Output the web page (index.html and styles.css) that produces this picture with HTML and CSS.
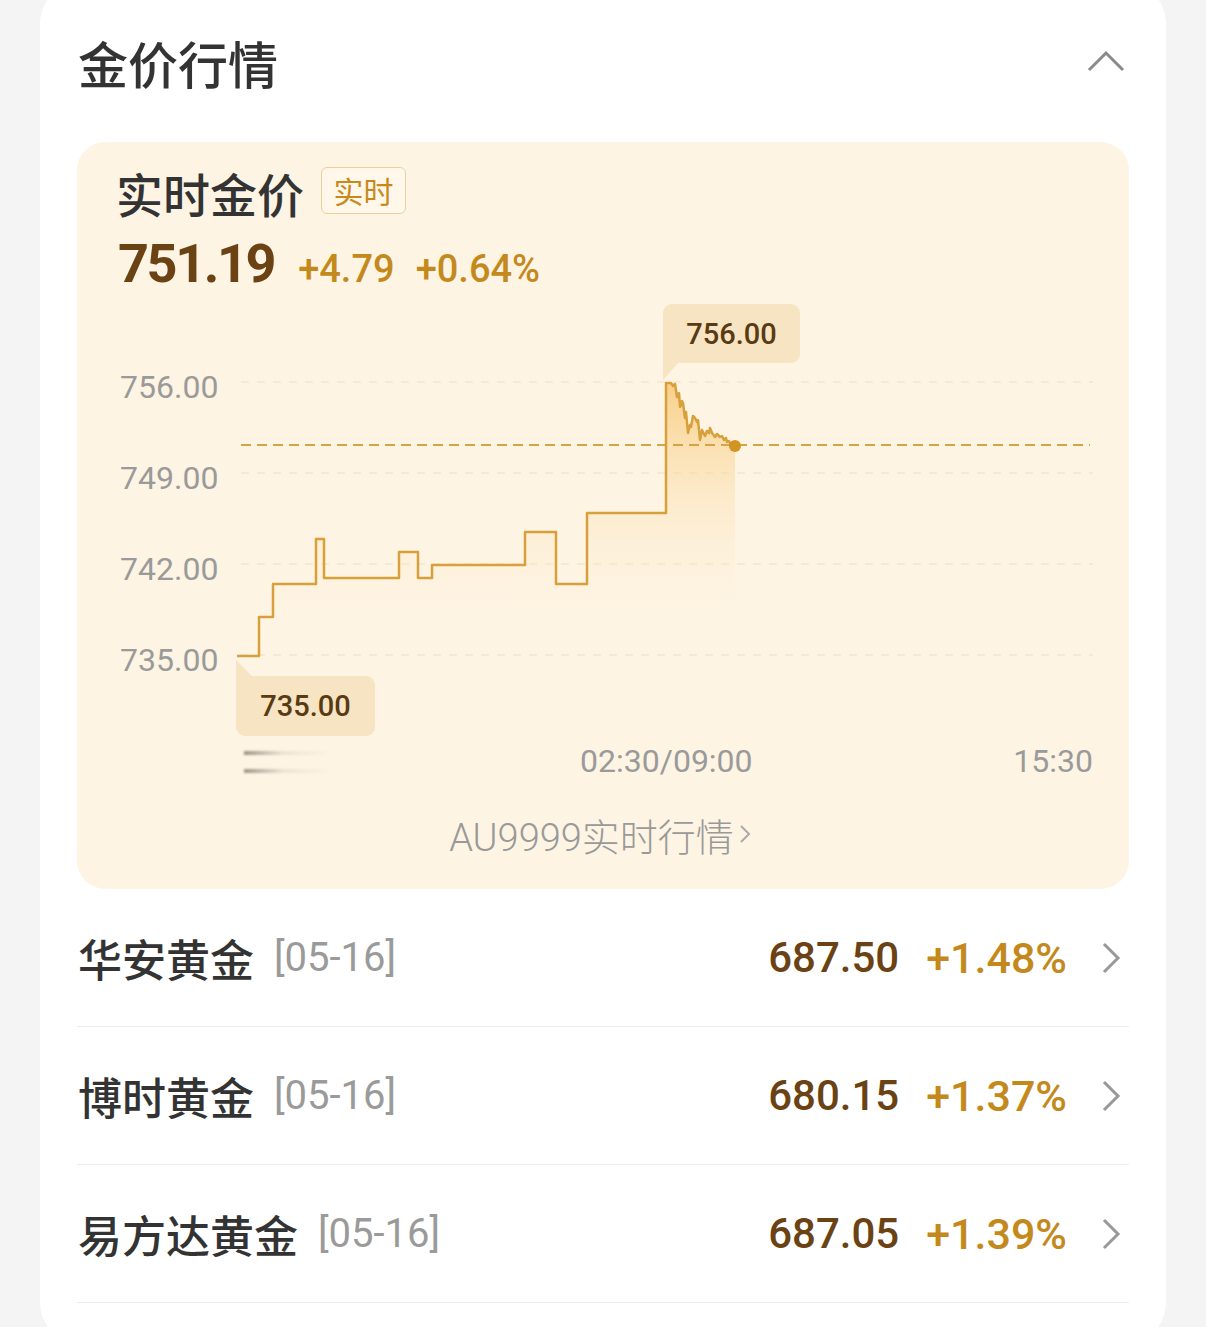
FILE: index.html
```html
<!DOCTYPE html>
<html lang="zh-CN">
<head>
<meta charset="utf-8">
<title>金价行情</title>
<link rel="stylesheet" href="styles.css">
</head>
<body>
<div class="card">
  <div class="header">
    <h1 class="title">金价行情</h1>
    <svg class="collapse" width="38" height="22" viewBox="0 0 38 22"><polyline points="2,20 19,3 36,20" fill="none" stroke="#8a8a8a" stroke-width="3"/></svg>
  </div>

  <div class="gold-box">
    <div class="gb-title">
      <span class="gb-name">实时金价</span>
      <span class="badge">实时</span>
    </div>
    <div class="gb-price">
      <span class="price-main">751.19</span>
      <span class="price-chg">+4.79</span>
      <span class="price-chg">+0.64%</span>
    </div>

    <div class="chart">
      <div class="plot-row">
        <div class="y-axis">
          <span>756.00</span>
          <span>749.00</span>
          <span>742.00</span>
          <span>735.00</span>
        </div>
        <svg class="plot" width="856" height="440" viewBox="237 292 856 440">
          <defs>
            <linearGradient id="fillg" gradientUnits="userSpaceOnUse" x1="0" y1="383" x2="0" y2="625">
              <stop offset="0" stop-color="#f7c36a" stop-opacity="0.75"/>
              <stop offset="0.45" stop-color="#f9d597" stop-opacity="0.35"/>
              <stop offset="1" stop-color="#fdf1dc" stop-opacity="0"/>
            </linearGradient>
          </defs>
          <g stroke="#f3e6cd" stroke-width="1.5" stroke-dasharray="8 8">
            <line x1="241" y1="382" x2="1093" y2="382"/>
            <line x1="241" y1="473" x2="1093" y2="473"/>
            <line x1="241" y1="564" x2="1093" y2="564"/>
            <line x1="241" y1="655" x2="1093" y2="655"/>
          </g>
          <path fill="url(#fillg)" d="M237,656 H259 V617 H273 V584 H316 V539 H324 V578 H399 V552 H418 V578 H432 V565 H525 V532 H556 V584 H587 V513 H666 V383 L671,383 L673,386 L675,384 L677,397 L679,393 L680,407 L682,401 L683,403 L685,418 L686,412 L688,433 L690,425 L691,427 L693,416 L695,418 L697,422 L698,420 L700,440 L702,430 L703,432 L705,436 L707,431 L709,433 L710,428 L712,433 L715,437 L717,434 L720,437 L722,436 L724,440 L726,438 L727,442 L729,441 L732,447 L735,446 V700 H237 Z"/>
          <line x1="241" y1="445" x2="1090" y2="445" stroke="#d6a443" stroke-width="2" stroke-dasharray="10 6"/>
          <path fill="none" stroke="#d7a03a" stroke-width="2.5" stroke-linejoin="round" d="M237,656 H259 V617 H273 V584 H316 V539 H324 V578 H399 V552 H418 V578 H432 V565 H525 V532 H556 V584 H587 V513 H666 V383 L671,383 L673,386 L675,384 L677,397 L679,393 L680,407 L682,401 L683,403 L685,418 L686,412 L688,433 L690,425 L691,427 L693,416 L695,418 L697,422 L698,420 L700,440 L702,430 L703,432 L705,436 L707,431 L709,433 L710,428 L712,433 L715,437 L717,434 L720,437 L722,436 L724,440 L726,438 L727,442 L729,441 L732,447 L735,446"/>
          <circle cx="735" cy="446" r="6" fill="#d19423"/>
        </svg>
      </div>
      <div class="x-axis">
        <span class="blurred"></span>
        <span class="x-mid">02:30/09:00</span>
        <span class="x-end">15:30</span>
      </div>
      <div class="tip tip-high">756.00</div>
      <div class="tip tip-low">735.00</div>
    </div>

    <div class="more">
      <span>AU9999实时行情</span>
      <svg width="14" height="26" viewBox="0 0 14 26"><polyline points="3,5 11,13 3,21" fill="none" stroke="#aaa" stroke-width="2"/></svg>
    </div>
  </div>

  <ul class="list">
    <li class="row">
      <span class="row-name">华安黄金</span>
      <span class="row-date">[05-16]</span>
      <span class="row-price">687.50</span>
      <span class="row-chg">+1.48%</span>
      <svg class="row-arrow" width="20" height="34" viewBox="0 0 20 34"><polyline points="3,3 17,17 3,31" fill="none" stroke="#999" stroke-width="3"/></svg>
    </li>
    <li class="row">
      <span class="row-name">博时黄金</span>
      <span class="row-date">[05-16]</span>
      <span class="row-price">680.15</span>
      <span class="row-chg">+1.37%</span>
      <svg class="row-arrow" width="20" height="34" viewBox="0 0 20 34"><polyline points="3,3 17,17 3,31" fill="none" stroke="#999" stroke-width="3"/></svg>
    </li>
    <li class="row">
      <span class="row-name">易方达黄金</span>
      <span class="row-date">[05-16]</span>
      <span class="row-price">687.05</span>
      <span class="row-chg">+1.39%</span>
      <svg class="row-arrow" width="20" height="34" viewBox="0 0 20 34"><polyline points="3,3 17,17 3,31" fill="none" stroke="#999" stroke-width="3"/></svg>
    </li>
  </ul>
</div>
</body>
</html>
```
FILE: styles.css
```css
* { box-sizing: border-box; }
html, body { margin: 0; padding: 0; }
body {
  background: #f4f4f4;
  font-family: "Noto Sans CJK SC", "Noto Sans", sans-serif;
  color: #333;
  height: 1327px;
  overflow: hidden;
}
.card {
  margin: -17px 40px 0;
  background: #fff;
  border-radius: 40px;
  padding: 44px 37px 40px;
}
.header {
  display: flex;
  align-items: center;
  justify-content: space-between;
  height: 70px;
  padding: 0 4px 0 1px;
}
.title {
  margin: 0;
  font-size: 50px;
  font-weight: 500;
  line-height: 70px;
  color: #333;
}
.collapse { margin-bottom: 2px; }

.gold-box {
  margin-top: 45px;
  background: #fef4e3;
  border-radius: 28px;
  padding: 20px 36px 25px 41px;
}
.gb-title {
  display: flex;
  align-items: center;
  height: 60px;
}
.gb-name {
  font-size: 47px;
  font-weight: 500;
  color: #333;
  margin-left: -2px;
}
.badge {
  margin-left: 17px;
  width: 85px;
  height: 47px;
  border: 1.5px solid #ebd199;
  border-radius: 6px;
  background: #fff8ea;
  color: #c8891a;
  font-size: 30px;
  display: flex;
  align-items: center;
  justify-content: center;
  margin-top: -4px;
}
.gb-price {
  margin-top: 14px;
  height: 56px;
  display: flex;
  align-items: baseline;
  font-family: Roboto, "Noto Sans", sans-serif;
}
.price-main {
  font-size: 54px;
  font-weight: 700;
  letter-spacing: -2.4px;
  color: #6a4213;
  line-height: 56px;
  margin-right: 24px;
}
.price-chg {
  font-size: 38px;
  font-weight: 500;
  color: #c4891c;
  margin-right: 21px;
}

.chart { position: relative; }
.plot-row {
  display: flex;
  height: 440px;
}
.y-axis {
  width: 119px;
  padding-top: 50px;
  display: flex;
  flex-direction: column;
  font-family: Roboto, sans-serif;
  font-size: 32px;
  color: #9a9a9a;
}
.y-axis span {
  height: 91px;
  line-height: 91px;
  padding-left: 2px;
}
.plot { overflow: visible; display: block; }

.x-axis {
  display: flex;
  align-items: center;
  height: 58px;
  padding-left: 126px;
  font-family: Roboto, sans-serif;
  font-size: 32px;
  color: #9a9a9a;
}
.blurred {
  width: 86px;
  height: 26px;
  background:
    linear-gradient(90deg, rgba(120,110,100,0.7), rgba(200,190,180,0.3) 45%, rgba(254,244,227,0) 100%) 0 3px / 100% 4px no-repeat,
    linear-gradient(90deg, rgba(120,110,100,0.7), rgba(200,190,180,0.3) 45%, rgba(254,244,227,0) 100%) 0 21px / 100% 4px no-repeat;
  filter: blur(1px);
}
.x-mid { margin-left: 250px; }
.x-end { margin-left: auto; }

.tip {
  position: absolute;
  background: #f6e4c2;
  border-radius: 9px;
  font-family: Roboto, sans-serif;
  font-size: 29px;
  font-weight: 500;
  color: #5a3a12;
  display: flex;
  align-items: center;
  justify-content: center;
}
.tip-high { left: 545px; top: 12px; width: 137px; height: 59px; border-bottom-left-radius: 0; }
.tip-high::after {
  content: "";
  position: absolute;
  left: 0;
  top: 100%;
  width: 15px;
  height: 17px;
  background: #f6e4c2;
  clip-path: polygon(0 0, 100% 0, 0 100%);
}
.tip-low { left: 118px; top: 384px; width: 139px; height: 60px; border-top-left-radius: 0; }
.tip-low::before {
  content: "";
  position: absolute;
  left: 0;
  bottom: 100%;
  width: 16px;
  height: 16px;
  background: #f6e4c2;
  clip-path: polygon(0 0, 0 100%, 100% 100%);
}

.more {
  margin-top: 14px;
  height: 60px;
  display: flex;
  align-items: center;
  justify-content: center;
  padding-right: 10px;
  font-family: Roboto, "Noto Sans CJK SC", sans-serif;
  font-size: 38px;
  font-weight: 300;
  color: #999;
}
.more svg { margin-left: 4px; }

.list { list-style: none; margin: 0; padding: 0; }
.row {
  display: flex;
  align-items: center;
  height: 138px;
  border-bottom: 1.5px solid #ececec;
  padding-left: 1px;
}
.row-name {
  font-size: 44px;
  font-weight: 500;
  color: #333;
}
.row-date {
  margin-left: 20px;
  font-family: Roboto, sans-serif;
  font-size: 40px;
  color: #9a9a9a;
}
.row-price {
  margin-left: auto;
  font-family: Roboto, sans-serif;
  font-size: 42px;
  font-weight: 500;
  color: #6a4213;
}
.row-chg {
  margin-left: 27px;
  font-family: Roboto, sans-serif;
  font-size: 43px;
  font-weight: 500;
  color: #c4891c;
}
.row-arrow { margin-left: 34px; margin-right: 8px; }
```
